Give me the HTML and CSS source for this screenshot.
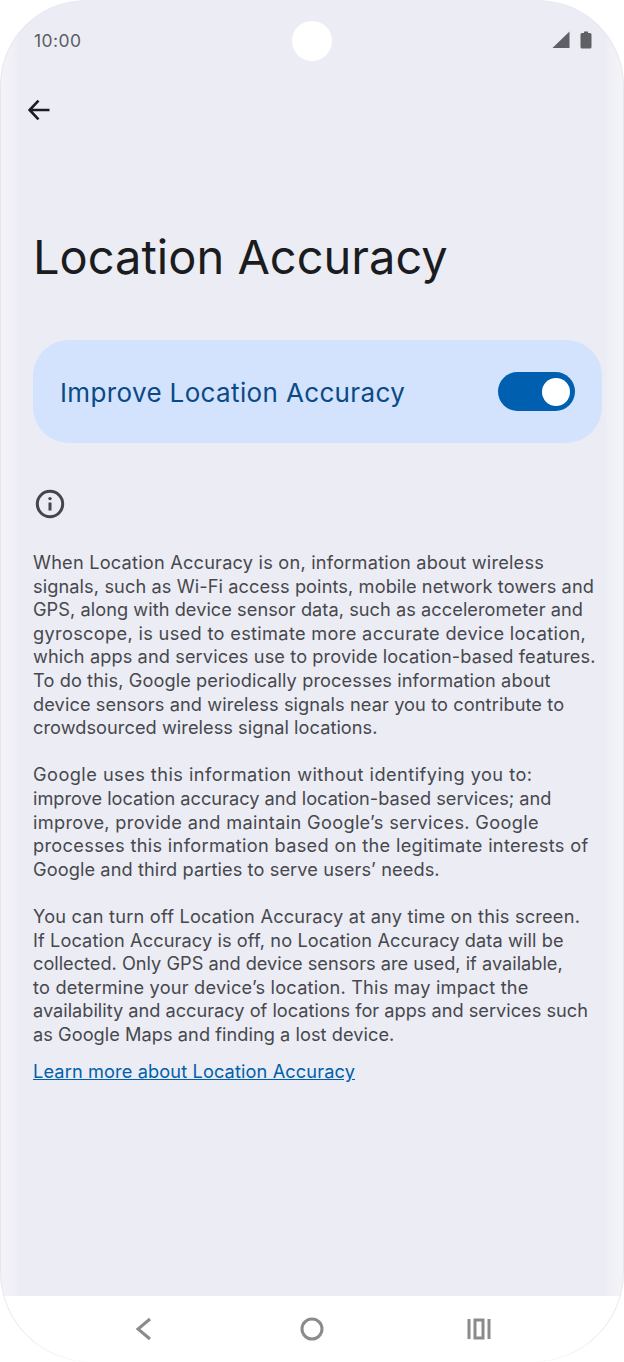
FILE: index.html
```html
<!DOCTYPE html>
<html lang="en">
<head>
<meta charset="utf-8">
<title>Location Accuracy</title>
<link rel="stylesheet" href="styles.css">
</head>
<body>
<div class="phone">
  <div class="screen">
    <div class="edge edge-left"></div>
    <div class="edge edge-right"></div>
    <header class="status">
      <span class="time">10:00</span>
      <span class="camera"></span>
      <span class="status-icons">
        <svg class="signal" width="18" height="18" viewBox="0 0 18 18"><path d="M0.5 17 L17.5 0.5 V17 Z"/></svg>
        <svg class="battery" width="12" height="18" viewBox="0 0 12 18"><path d="M4 0.5 H8 V2 H10 Q11.5 2 11.5 3.5 V16 Q11.5 17.5 10 17.5 H2 Q0.5 17.5 0.5 16 V3.5 Q0.5 2 2 2 H4 Z"/></svg>
      </span>
    </header>
    <div class="toolbar">
      <svg class="back" width="24" height="24" viewBox="0 0 24 24"><path d="M22.5 12 H2.8 M11.5 2.6 L2.6 12 L11.5 21.4"/></svg>
    </div>
    <h1 class="title">Location Accuracy</h1>
    <div class="switch-card">
      <span class="switch-label">Improve Location Accuracy</span>
      <span class="toggle"><span class="thumb"></span></span>
    </div>
    <svg class="info" width="30" height="30" viewBox="0 0 30 30"><circle cx="15" cy="15" r="12.7"/><path d="M15 13.5 V21.5"/><circle class="dot" cx="15" cy="9.6" r="1.7"/></svg>
    <div class="copy">
      <p class="para">
        <span class="line fit-2">When Location Accuracy is on, information about wireless</span>
        <span class="line fit-1">signals, such as Wi-Fi access points, mobile network towers and</span>
        <span class="line fit-0">GPS, along with device sensor data, such as accelerometer and</span>
        <span class="line fit-3">gyroscope, is used to estimate more accurate device location,</span>
        <span class="line fit-1">which apps and services use to provide location-based features.</span>
        <span class="line fit-1">To do this, Google periodically processes information about</span>
        <span class="line fit-1">device sensors and wireless signals near you to contribute to</span>
        <span class="line fit-0">crowdsourced wireless signal locations.</span>
      </p>
      <p class="para">
        <span class="line fit-4">Google uses this information without identifying you to:</span>
        <span class="line">improve location accuracy and location-based services; and</span>
        <span class="line fit-3">improve, provide and maintain Google’s services. Google</span>
        <span class="line fit-3">processes this information based on the legitimate interests of</span>
        <span class="line fit-1">Google and third parties to serve users’ needs.</span>
      </p>
      <p class="para">
        <span class="line fit-2">You can turn off Location Accuracy at any time on this screen.</span>
        <span class="line fit-1">If Location Accuracy is off, no Location Accuracy data will be</span>
        <span class="line">collected. Only GPS and device sensors are used, if available,</span>
        <span class="line fit-2">to determine your device’s location. This may impact the</span>
        <span class="line">availability and accuracy of locations for apps and services such</span>
        <span class="line fit-0">as Google Maps and finding a lost device.</span>
      </p>
      <a class="learn" href="#">Learn more about Location Accuracy</a>
    </div>
    <nav class="nav">
      <svg class="nav-icon" width="18" height="24" viewBox="0 0 18 24"><path d="M15 2 L3 12 L15 22"/></svg>
      <svg class="nav-icon" width="24" height="24" viewBox="0 0 24 24"><circle cx="12" cy="12" r="10"/></svg>
      <svg class="nav-icon" width="24" height="24" viewBox="0 0 24 24"><path d="M2 2 V22 M22 2 V22 M8 3 H16 V21 H8 Z"/></svg>
    </nav>
    <div class="bezel"></div>
  </div>
</div>
</body>
</html>
```
FILE: styles.css
```css
* { box-sizing: border-box; }
html, body { margin: 0; padding: 0; background: #fff; }
body { width: 624px; height: 1362px; overflow: hidden; font-family: Inter, "Liberation Sans", sans-serif; }
.phone { width: 624px; height: 1362px; background: #fff; }
.screen {
  position: relative;
  width: 624px;
  height: 1362px;
  background: #ebecf4;
  border-radius: 86px 86px 90px 90px;
  overflow: hidden;
  display: flex;
  flex-direction: column;
}
.bezel {
  position: absolute;
  inset: 0;
  border: 1px solid #e6e6eb;
  border-radius: 86px 86px 90px 90px;
  pointer-events: none;
  -webkit-mask-image: linear-gradient(90deg, #000 0, #000 20px, transparent 90px, transparent 534px, #000 604px, #000 100%);
  mask-image: linear-gradient(90deg, #000 0, #000 20px, transparent 90px, transparent 534px, #000 604px, #000 100%);
}
.edge { position: absolute; top: 0; bottom: 0; width: 18px; background: linear-gradient(90deg, #f4f4f8, #eeeff6); }
.edge-left { left: 0; }
.edge-right { right: 0; transform: scaleX(-1); }
.status { position: relative; height: 98px; flex: none; padding: 0 32px 0 34px; display: flex; align-items: flex-start; justify-content: space-between; }
.time { margin-top: 30px; font: 400 17.5px/22px Inter, sans-serif; color: #5c5d62; letter-spacing: 0.45px; }
.camera { position: absolute; left: 292px; top: 21px; width: 40px; height: 40px; border-radius: 50%; background: #fff; }
.status-icons { margin-top: 31px; display: flex; gap: 10px; }
.status-icons svg { display: block; fill: #5f6065; }
.toolbar { flex: none; height: 24px; padding-left: 27px; }
.back { display: block; fill: none; stroke: #1c1d20; stroke-width: 2.6; }
.title { flex: none; margin: 102px 0 0 33px; font: 400 47px/66px Inter, sans-serif; color: #1b1c20; white-space: nowrap; letter-spacing: 0; height: 66px; }
.switch-card { flex: none; margin: 50px 22px 0 33px; height: 103px; border-radius: 36px; background: #d3e2fd; display: flex; align-items: center; justify-content: space-between; padding: 0 27px 0 27px; }
.switch-label { font: 400 26px/34px Inter, sans-serif; color: #0a4a86; white-space: nowrap; letter-spacing: 0.36px; padding-top: 2px; }
.toggle { width: 77px; height: 39px; border-radius: 20px; background: #015fb0; display: flex; align-items: center; justify-content: flex-end; padding-right: 5px; }
.thumb { width: 28px; height: 28px; border-radius: 50%; background: #fff; display: block; }
.info { flex: none; display: block; margin: 46px 0 0 35px; fill: none; stroke: #44464b; stroke-width: 3; }
.info .dot { fill: #44464b; stroke: none; }
.copy { flex: none; margin: 32px 0 0 33px; }
.para { margin: 0 0 23.6px; color: #47484d; font: 400 18.2px/23.6px Inter, sans-serif; }
.line { display: block; white-space: nowrap; }
.fit-0 { letter-spacing: 0.05px; }
.fit-1 { letter-spacing: 0.1px; }
.fit-2 { letter-spacing: 0.21px; }
.fit-3 { letter-spacing: 0.33px; }
.fit-4 { letter-spacing: 0.46px; }
.learn { display: block; margin-top: -10px; color: #0060ab; text-decoration: underline; font: 400 18.2px/23.6px Inter, sans-serif; white-space: nowrap; letter-spacing: 0.12px; }
.nav { position: absolute; left: 0; right: 0; top: 1296px; bottom: 0; background: #fff; display: flex; }
.nav-icon { position: absolute; top: 21px; fill: none; stroke: #8a8b8d; stroke-width: 3; }
.nav-icon:nth-child(1) { left: 135px; }
.nav-icon:nth-child(2) { left: 300px; }
.nav-icon:nth-child(3) { left: 467px; }
```
